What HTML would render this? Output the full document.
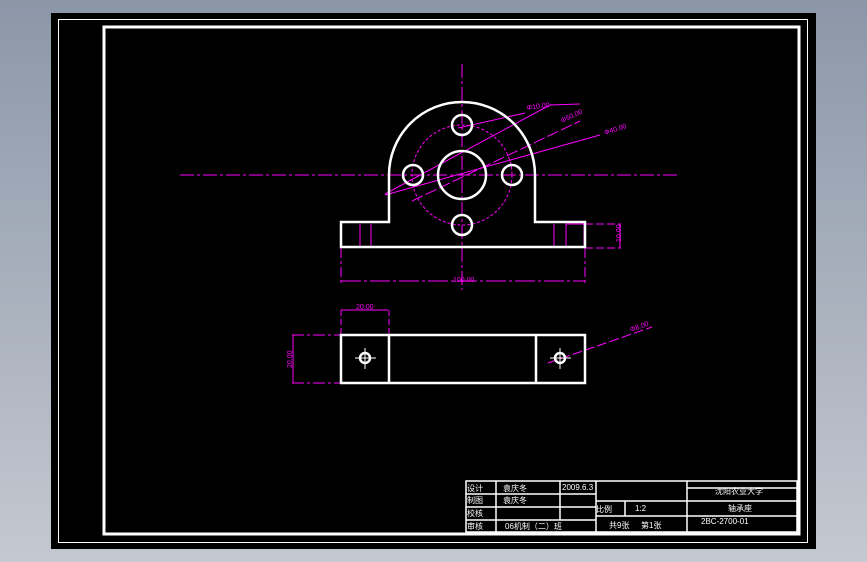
<!DOCTYPE html>
<html><head><meta charset="utf-8"><style>
html,body{margin:0;padding:0}
body{width:867px;height:562px;background:linear-gradient(#8b97a8,#c4c8d0);position:relative;overflow:hidden}
svg{position:absolute;left:0;top:0}
text{font-family:"Liberation Sans","Noto Sans CJK SC",sans-serif}
</style></head><body>
<svg width="867" height="562" viewBox="0 0 867 562">
<rect x="51" y="13" width="765" height="536" fill="#000"/>
<rect x="58.5" y="19.5" width="749" height="523" fill="none" stroke="#fff" stroke-width="1"/>
<rect x="104" y="27" width="695" height="507" fill="none" stroke="#fff" stroke-width="3"/>
<g fill="none" stroke="#f0f" stroke-width="1">
<line x1="180" y1="175" x2="680" y2="175" stroke-dasharray="14,3,3,3"/>
<line x1="462" y1="64" x2="462" y2="290" stroke-dasharray="14,3,3,3"/>
<circle cx="462" cy="175" r="50" stroke-dasharray="3,2"/>
<line x1="385" y1="194" x2="550" y2="105"/><line x1="550" y1="105" x2="580" y2="104"/>
<line x1="412" y1="201" x2="580" y2="121" stroke-dasharray="12,3"/>
<line x1="385" y1="195" x2="600" y2="135"/>
<line x1="458" y1="128" x2="525" y2="113"/>
<line x1="341" y1="248" x2="341" y2="283" stroke-dasharray="10,3,3,3"/>
<line x1="585" y1="248" x2="585" y2="283" stroke-dasharray="10,3,3,3"/>
<line x1="341" y1="281" x2="585" y2="281" stroke-dasharray="20,3,3,3"/>
<line x1="360" y1="224" x2="360" y2="247"/><line x1="371" y1="224" x2="371" y2="247"/>
<line x1="554" y1="224" x2="554" y2="247"/><rect x="566" y="224" width="18" height="23"/>
<line x1="585" y1="224" x2="621" y2="224" stroke-dasharray="8,3"/>
<line x1="585" y1="248" x2="621" y2="248" stroke-dasharray="8,3"/>
<line x1="620" y1="224" x2="620" y2="248"/>
<line x1="341" y1="310" x2="388" y2="310"/>
<line x1="341" y1="310" x2="341" y2="334" stroke-dasharray="6,3"/>
<line x1="389" y1="310" x2="389" y2="334" stroke-dasharray="6,3"/>
<line x1="292" y1="335" x2="340" y2="335" stroke-dasharray="12,3,3,3"/>
<line x1="292" y1="383" x2="340" y2="383" stroke-dasharray="12,3,3,3"/>
<line x1="293" y1="335" x2="293" y2="383"/>
<line x1="548" y1="363" x2="652" y2="327" stroke-dasharray="10,3"/>
</g>
<g fill="#f0f" font-size="7">
<text x="527" y="110" transform="rotate(-8 527 110)">Φ10.00</text>
<text x="562" y="123" transform="rotate(-25 562 123)">Φ50.00</text>
<text x="605" y="135" transform="rotate(-18 605 135)">Φ40.00</text>
<text x="453" y="282">100.00</text>
<text x="621" y="242" transform="rotate(-90 621 242)">10.00</text>
<text x="356" y="309">20.00</text>
<text x="292" y="368" transform="rotate(-90 292 368)">20.00</text>
<text x="631" y="332" transform="rotate(-20 631 332)">Φ8.00</text>
</g>
<g fill="none" stroke="#fff" stroke-width="2.5">
<path d="M341 222 H389 V175 A73 73 0 0 1 535 175 V222 H585 V247 H341 Z"/>
<circle cx="462" cy="175" r="24"/>
<circle cx="462" cy="125" r="10"/><circle cx="413" cy="175" r="10"/>
<circle cx="512" cy="175" r="10"/><circle cx="462" cy="225" r="10"/>
<rect x="341" y="335" width="244" height="48"/>
<line x1="389" y1="335" x2="389" y2="383"/><line x1="536" y1="335" x2="536" y2="383"/>
<circle cx="365" cy="358" r="5"/><circle cx="560" cy="358" r="5"/>
</g>
<g stroke="#fff" stroke-width="1">
<line x1="355" y1="358" x2="376" y2="358"/><line x1="365" y1="348" x2="365" y2="369"/>
<line x1="550" y1="358" x2="571" y2="358"/><line x1="560" y1="348" x2="560" y2="369"/>
</g>
<g fill="none" stroke="#fff" stroke-width="1.5">
<rect x="466" y="481" width="331" height="51"/>
<line x1="466" y1="494" x2="596" y2="494"/><line x1="466" y1="507" x2="596" y2="507"/><line x1="466" y1="520" x2="596" y2="520"/>
<line x1="596" y1="501" x2="797" y2="501"/><line x1="596" y1="516" x2="687" y2="516"/>
<line x1="687" y1="488" x2="797" y2="488"/><line x1="687" y1="516" x2="797" y2="516"/>
<line x1="496" y1="481" x2="496" y2="532"/><line x1="560" y1="481" x2="560" y2="520"/>
<line x1="596" y1="481" x2="596" y2="532"/><line x1="625" y1="501" x2="625" y2="516"/>
<line x1="687" y1="481" x2="687" y2="532"/>
</g>
<g fill="#fff" font-size="8">
<text x="467" y="491">设计</text><text x="503" y="491">袁庆冬</text><text x="562" y="490">2009.6.3</text>
<text x="467" y="503">制图</text><text x="503" y="503">袁庆冬</text>
<text x="467" y="516">校核</text><text x="467" y="529">审核</text><text x="505" y="529">06机制（二）班</text>
<text x="596" y="512">比例</text><text x="635" y="511">1:2</text>
<text x="609" y="528">共9张</text><text x="641" y="528">第1张</text>
<text x="715" y="494">沈阳农业大学</text><text x="728" y="511">轴承座</text>
<text x="701" y="524">2BC-2700-01</text>
</g>
</svg>
</body></html>
